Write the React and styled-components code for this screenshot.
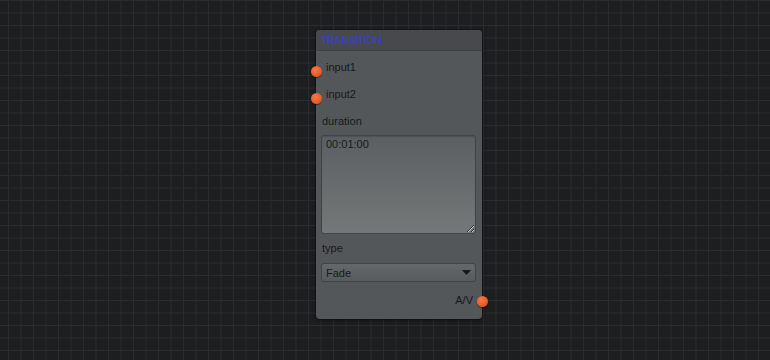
import React from "react";
import styled, { createGlobalStyle } from "styled-components";

const Global = createGlobalStyle`
  html, body { margin: 0; padding: 0; }
  body {
    width: 770px;
    height: 360px;
    overflow: hidden;
    background-color: #1d1e20;
    background-image:
      linear-gradient(to right, #2a2b2e 1px, transparent 1px),
      linear-gradient(to bottom, #2a2b2e 1px, transparent 1px);
    background-size: 12.5px 12.5px;
    background-position: 8px 0;
    font-family: "Liberation Sans", Arial, sans-serif;
  }
`;

const Canvas = styled.div`
  position: relative;
  width: 770px;
  height: 360px;
`;

const Node = styled.div`
  position: absolute;
  left: ${(p) => p.$x}px;
  top: ${(p) => p.$y}px;
  width: 166px;
  height: 289px;
  box-sizing: border-box;
  background: #54575a;
  border-radius: 4px;
  box-shadow: 0 0 0 1px rgba(0, 0, 0, 0.25), 0 2px 4px rgba(0, 0, 0, 0.35);
  display: flex;
  flex-direction: column;
`;

const Header = styled.div`
  height: 21px;
  box-sizing: border-box;
  display: flex;
  align-items: center;
  padding: 0 5px;
  background: #47494c;
  border-bottom: 1px solid #3f4245;
  border-radius: 4px 4px 0 0;
  color: #3b42b0;
  font-family: "Liberation Sans", Arial, sans-serif;
  font-weight: 700;
  font-size: 10.5px;
  letter-spacing: -0.35px;
`;

const Body = styled.div`
  display: flex;
  flex-direction: column;
  padding: 0 6px 0 5px;
  color: #17181a;
  font-size: 11px;
  line-height: 13px;
`;

const PortRow = styled.div`
  position: relative;
  height: 27px;
  box-sizing: border-box;
  padding-top: 10px;
  padding-left: 5px;
`;

const OutRow = styled.div`
  position: relative;
  margin-top: ${(p) => p.$mt}px;
  text-align: right;
  padding-right: 3px;
`;

const Dot = styled.span`
  position: absolute;
  width: 11px;
  height: 11px;
  border-radius: 50%;
  background: radial-gradient(circle at 40% 35%, #f57a45 0%, #e85e28 55%, #c94a1a 100%);
  box-shadow: 0 1px 1px rgba(0, 0, 0, 0.45);
  top: ${(p) => p.$top}px;
  ${(p) => (p.$side === "left" ? "left: -10.5px;" : "right: -11.5px;")}
`;

const Label = styled.div`
  margin-top: ${(p) => p.$mt}px;
  padding-left: 1px;
`;

const Area = styled.textarea`
  display: block;
  margin-top: ${(p) => p.$mt}px;
  width: 155px;
  height: 99px;
  box-sizing: border-box;
  border: 1px solid #414447;
  border-radius: 3px;
  background: linear-gradient(to bottom, #5b5f62 0%, #747878 100%);
  color: #17181a;
  font-family: "Liberation Sans", Arial, sans-serif;
  font-size: 11px;
  line-height: 13px;
  padding: 2px 4px;
  outline: none;
  resize: both;
  box-shadow: inset 0 1px 1px rgba(0, 0, 0, 0.15);
`;

const SelectWrap = styled.div`
  position: relative;
  margin-top: ${(p) => p.$mt}px;
  width: 155px;
  height: 19px;
`;

const Select = styled.select`
  appearance: none;
  -webkit-appearance: none;
  display: block;
  width: 100%;
  height: 100%;
  box-sizing: border-box;
  border: 1px solid #414447;
  border-radius: 3px;
  background: linear-gradient(to bottom, #64686a 0%, #585b5e 100%);
  color: #17181a;
  font-family: "Liberation Sans", Arial, sans-serif;
  font-size: 11px;
  padding: 0 4px;
  outline: none;
`;

const Arrow = styled.svg`
  position: absolute;
  right: 5px;
  top: 7px;
  pointer-events: none;
`;

export default function App() {
  return (
    <>
      <Global />
      <Canvas>
        <Node $x={316} $y={30}>
          <Header>TRANSITION</Header>
          <Body>
            <PortRow>
              input1
              <Dot $side="left" $top={14.5} />
            </PortRow>
            <PortRow>
              input2
              <Dot $side="left" $top={14.5} />
            </PortRow>
            <Label $mt={10}>duration</Label>
            <Area $mt={7} readOnly value="00:01:00" />
            <Label $mt={8}>type</Label>
            <SelectWrap $mt={8}>
              <Select defaultValue="Fade">
                <option>Fade</option>
              </Select>
              <Arrow width="9" height="5" viewBox="0 0 9 5">
                <path d="M0 0 L9 0 L4.5 5 Z" fill="#17181a" />
              </Arrow>
            </SelectWrap>
            <OutRow $mt={12}>
              A/V
              <Dot $side="right" $top={1.5} />
            </OutRow>
          </Body>
        </Node>
      </Canvas>
    </>
  );
}
